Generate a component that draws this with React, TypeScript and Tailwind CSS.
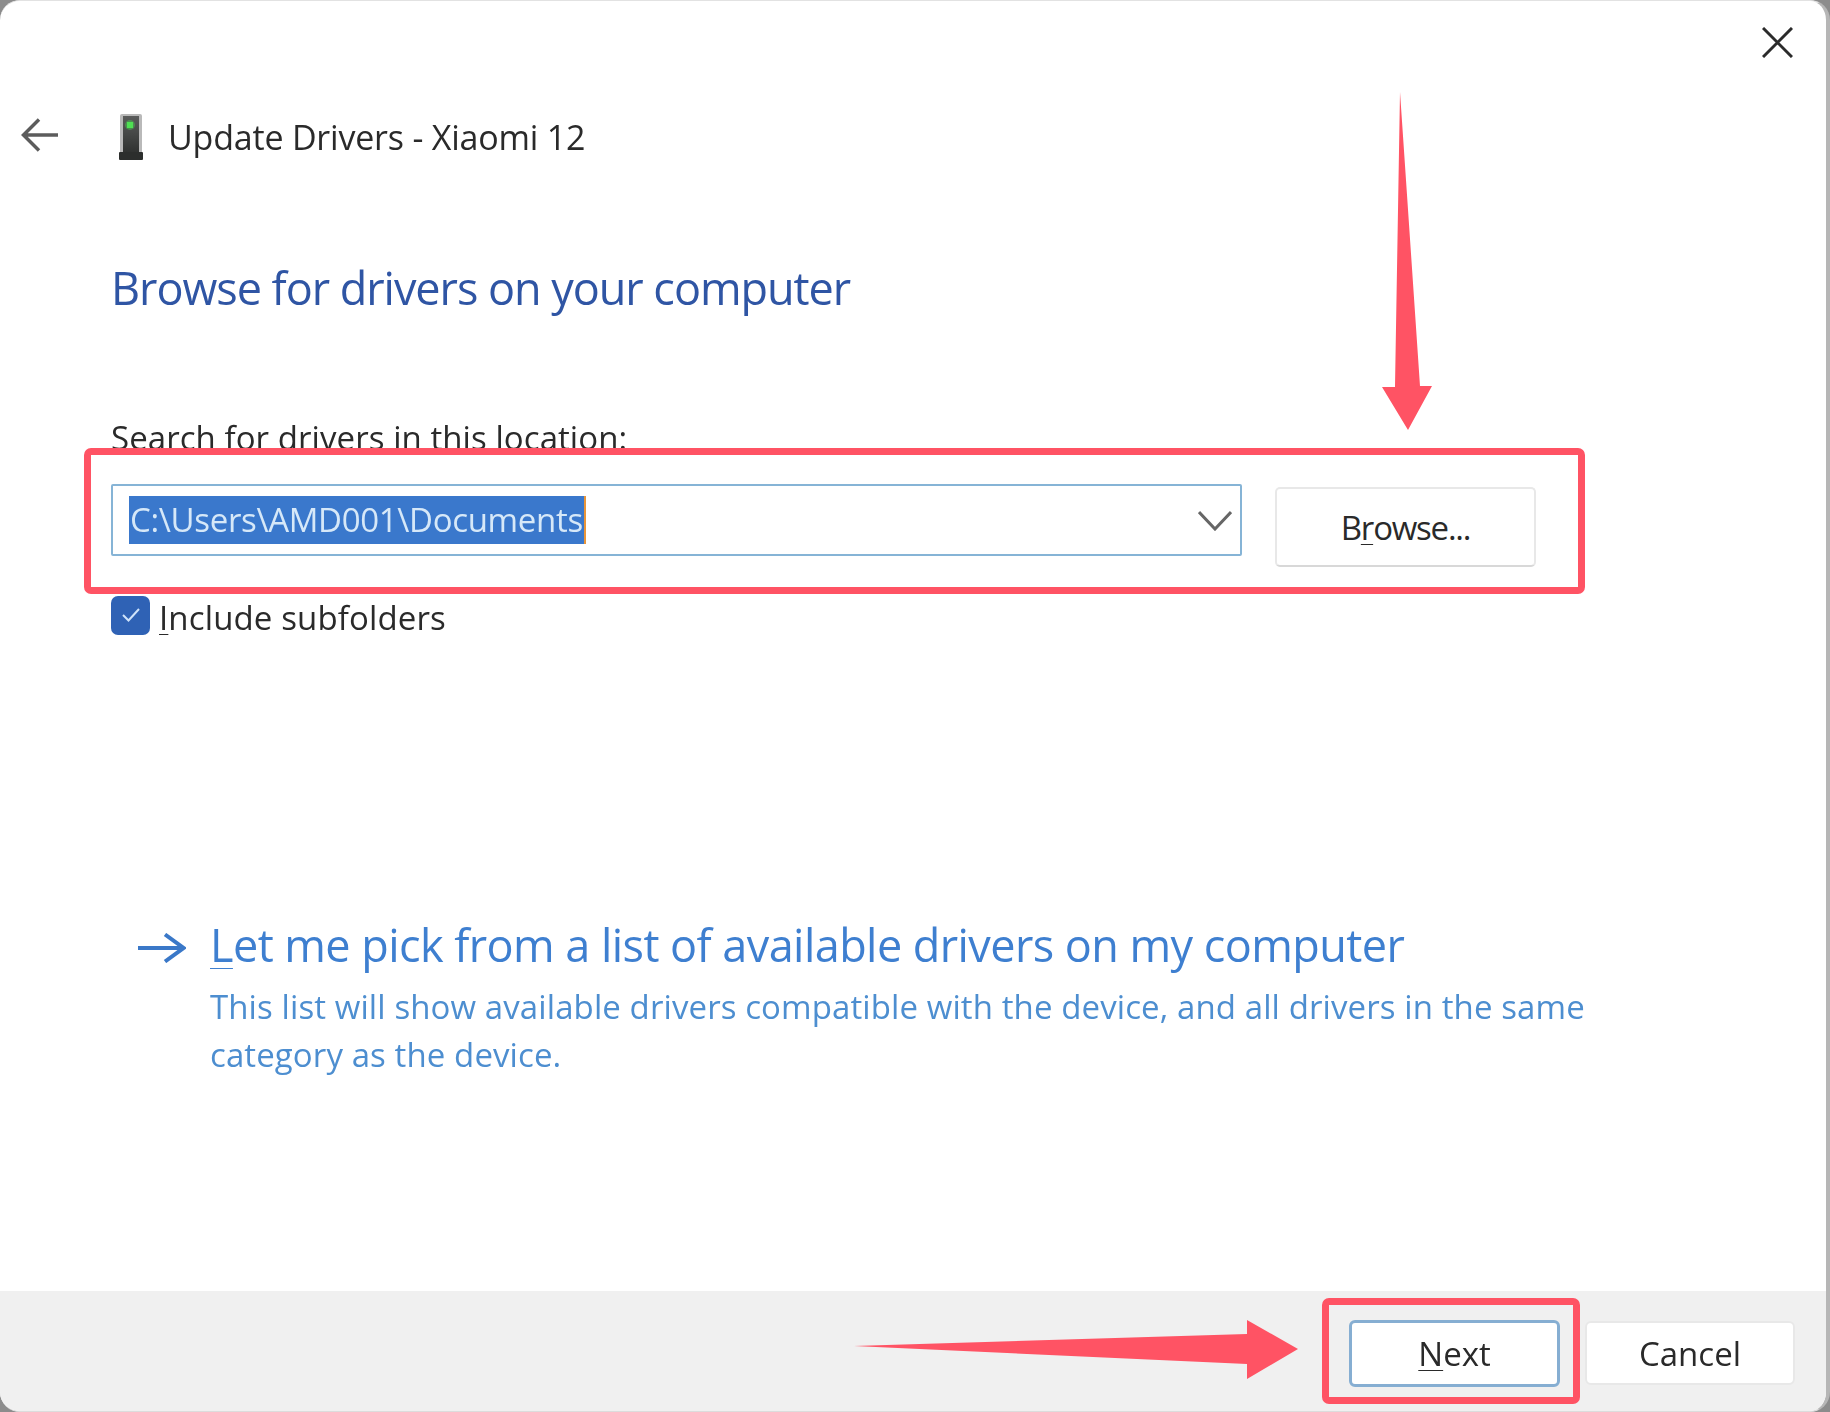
const FONT = "font-['Open_Sans','Noto_Sans',sans-serif]"

function Annotations() {
  return (
    <>
      <div className="absolute left-[84px] top-[448px] w-[1501px] h-[146px] border-[7px] border-[#ff5364] rounded-[7px]" />
      <div className="absolute left-[1322px] top-[1298px] w-[258px] h-[106px] border-[7px] border-[#ff5364] rounded-[7px]" />
      <svg className="absolute left-0 top-0" width="1830" height="1412">
        <polygon fill="#ff5364" points="1400,92 1395,387 1382,387 1408,430 1432,386 1420,386" />
        <polygon fill="#ff5364" points="854,1346 1247,1334 1247,1320 1298,1349 1247,1379 1247,1364" />
      </svg>
    </>
  )
}

function DeviceIcon() {
  return (
    <svg className="ml-[60px]" width="24" height="46" viewBox="0 0 24 46">
      <defs>
        <linearGradient id="body" x1="0" y1="0" x2="0" y2="1">
          <stop offset="0" stopColor="#5a5c5b" />
          <stop offset="1" stopColor="#2e302f" />
        </linearGradient>
      </defs>
      <rect x="1" y="0" width="22" height="40" rx="2" fill="#b9b9b9" />
      <rect x="4" y="2" width="16" height="38" fill="url(#body)" />
      <circle cx="11" cy="11" r="5" fill="#49d24f" opacity="0.45" />
      <rect x="8" y="8" width="6" height="6" fill="#4fe053" />
      <rect x="0" y="38" width="24" height="8" rx="1" fill="#2c2e2d" />
    </svg>
  )
}

export default function App() {
  return (
    <div className={`${FONT} relative w-[1830px] h-[1412px] bg-[#8c8c8c] overflow-hidden`}>
      <div className="flex flex-col h-full bg-white rounded-[20px] overflow-hidden border-t border-b border-r-[4px] border-t-[#e2e2e2] border-b-[#dcdcdc] border-r-[#b6b6b6]">
        <div className="flex flex-col flex-1 blur-[0.6px]">
          <div className="flex justify-end pt-[26px] pr-[33px]">
            <svg width="31" height="31" viewBox="0 0 31 31" fill="none" stroke="#2b2b2b" strokeWidth="3">
              <path d="M1 1 30 30M30 1 1 30" />
            </svg>
          </div>
          <div className="flex items-center h-[45px] mt-[56px] pl-[21px]">
            <svg className="-mt-[4px]" width="38" height="34" viewBox="0 0 38 34" fill="none" stroke="#5c5c5c" strokeWidth="3.5">
              <path d="M37 17H3M18 1.5 2.5 17 18 32.5" />
            </svg>
            <DeviceIcon />
            <span className="ml-[25px] text-[34px] leading-[44px] tracking-[-0.006em] text-[#2a2a2a] whitespace-nowrap">
              Update Drivers - Xiaomi 12
            </span>
          </div>

          <div className="flex-1 pl-[111px]">
            <h1 className="mt-[99px] text-[45px] leading-[60px] tracking-[-0.023em] text-[#2f55a4]">
              Browse for drivers on your computer
            </h1>
            <p className="mt-[98px] text-[33px] leading-[44px] tracking-[0.002em] text-[#2a2a2a]">
              Search for drivers in this location:
            </p>
            <div className="flex items-start mt-[24px]">
              <div className="flex items-center justify-between w-[1131px] h-[72px] pl-[16px] pr-[8px] border-2 border-[#86b4d6] rounded-[2px]">
                <span className="h-[48px] px-[1px] leading-[48px] text-[33px] tracking-[-0.01em] text-[#d6e8f8] bg-[#3a78cc] border-r-2 border-[#e8953a] whitespace-nowrap">
                  C:\Users\AMD001\Documents
                </span>
                <svg width="34" height="21" viewBox="0 0 34 21" fill="none" stroke="#666666" strokeWidth="3">
                  <path d="M1 2 17 19 33 2" />
                </svg>
              </div>
              <button className="flex items-center justify-center w-[261px] h-[80px] ml-[33px] mt-[3px] pt-[2px] bg-white border-2 border-[#e8e8e8] border-b-[#d8d8d8] rounded-[5px] text-[33px] tracking-[-0.037em] text-[#2a2a2a]">
                <span>B<span className="underline decoration-1 underline-offset-4">r</span>owse...</span>
              </button>
            </div>
            <div className="flex items-center mt-[28px] h-[40px]">
              <div className="flex items-center justify-center w-[39px] h-[39px] bg-[#2f62b5] rounded-[7px]">
                <svg width="20" height="16" viewBox="0 0 20 16" fill="none" stroke="#cfe3fa" strokeWidth="2">
                  <path d="M2 8 7.5 13.5 18 2" />
                </svg>
              </div>
              <span className="ml-[9px] mt-[6px] text-[33px] leading-[44px] tracking-[0.004em] text-[#2a2a2a] whitespace-nowrap">
                <span className="underline decoration-1 underline-offset-4">I</span>nclude subfolders
              </span>
            </div>

            <div className="flex items-start mt-[280px] pl-[27px]">
              <svg className="mt-[18px]" width="48" height="30" viewBox="0 0 48 30" fill="none" stroke="#3a78c8" strokeWidth="4">
                <path d="M0 15H45M27 1.5 45.5 15 27 28.5" />
              </svg>
              <div className="ml-[24px] w-[1400px]">
                <div className="text-[45px] leading-[60px] tracking-[-0.0124em] text-[#3e7fd0] whitespace-nowrap">
                  <span className="underline decoration-1 underline-offset-6">L</span>et me pick from a list of available drivers on my computer
                </div>
                <p className="mt-[8px] text-[33px] leading-[48px] tracking-[0.003em] text-[#4d8ed0]">
                  This list will show available drivers compatible with the device, and all drivers in the same category as the device.
                </p>
              </div>
            </div>
          </div>

          <div className="flex items-center justify-end gap-[25px] h-[120px] pr-[31px] pt-[4px] bg-[#f0f0f0]">
            <button className="flex items-center justify-center w-[211px] h-[67px] pt-[2px] bg-white border-[3px] border-[#86aed2] rounded-[6px] text-[33px] text-[#2a2a2a]">
              <span><span className="underline decoration-1 underline-offset-4">N</span>ext</span>
            </button>
            <button className="flex items-center justify-center w-[210px] h-[64px] pt-[2px] bg-white border-2 border-[#e8e8e8] rounded-[6px] text-[33px] text-[#2a2a2a]">
              Cancel
            </button>
          </div>
        </div>
      </div>
      <Annotations />
    </div>
  )
}
